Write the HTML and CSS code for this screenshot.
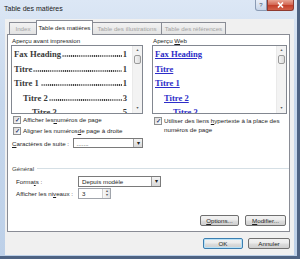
FILE: index.html
```html
<!DOCTYPE html>
<html>
<head>
    <title>Table des matières</title>
    <meta charset="UTF-8">
    <link rel="stylesheet" href="styles.css">
</head>
<body>
    <div class="window">
        <div class="titlebar">
            <span class="title">Table des matières</span>
            <div class="caption-buttons">
                <span class="cap-help">?</span>
                <span class="cap-close">
                    <svg width="7" height="6" viewBox="0 0 7 6"><path d="M1 0.5 L6 5.5 M6 0.5 L1 5.5" stroke="#fff" stroke-width="1.6"/></svg>
                </span>
            </div>
        </div>

        <div class="client">
            <div class="tabs">
                <span class="tab tab-disabled tab-index">Index</span>
                <span class="tab tab-active">Table des matières</span>
                <span class="tab tab-disabled tab-illus">Table des illustrations</span>
                <span class="tab tab-disabled tab-refs">Table des références</span>
            </div>

            <div class="panel">
                <div class="previews">
                    <div class="col">
                        <div class="caption">Aperçu avant impression</div>
                        <div class="preview">
                            <div class="lines print-lines">
                                <div class="line"><span>Fax Heading</span><span class="dots"></span><span>1</span></div>
                                <div class="line"><span>Titre</span><span class="dots"></span><span>1</span></div>
                                <div class="line"><span>Titre 1</span><span class="dots gap"></span><span>1</span></div>
                                <div class="line lvl2"><span>Titre 2</span><span class="dots"></span><span>3</span></div>
                                <div class="line lvl3"><span>Titre 3</span><span class="dots"></span><span>5</span></div>
                            </div>
                            <div class="scrollbar">
                                <span class="sb-arrow">▲</span>
                                <span class="sb-thumb"></span>
                                <span class="sb-fill"></span>
                                <span class="sb-arrow">▼</span>
                            </div>
                        </div>
                        <div class="check"><span class="box">✓</span>Afficher les <u>n</u>uméros de page</div>
                        <div class="check"><span class="box">✓</span>Aligner les numéros <u>d</u>e page à droite</div>
                        <div class="field suite">
                            <span class="field-label"><u>C</u>aractères de suite :</span>
                            <span class="combo combo-suite"><span class="combo-text">.......</span><span class="combo-arrow">▾</span></span>
                        </div>
                    </div>

                    <div class="col">
                        <div class="caption">Aperçu <u>W</u>eb</div>
                        <div class="preview">
                            <div class="lines web-lines">
                                <div class="line"><a>Fax Heading</a></div>
                                <div class="line"><a>Titre</a></div>
                                <div class="line"><a>Titre 1</a></div>
                                <div class="line lvl2"><a>Titre 2</a></div>
                                <div class="line lvl3"><a>Titre 3</a></div>
                            </div>
                            <div class="scrollbar">
                                <span class="sb-arrow">▲</span>
                                <span class="sb-thumb"></span>
                                <span class="sb-fill"></span>
                                <span class="sb-arrow">▼</span>
                            </div>
                        </div>
                        <div class="check check-wrap"><span class="box">✓</span><span>Utiliser des liens <u>h</u>ypertexte à la place des numéros de page</span></div>
                    </div>
                </div>

                <div class="general">
                    <div class="group-title"><span>Général</span><span class="rule"></span></div>
                    <div class="field">
                        <span class="field-label wide">Forma<u>t</u>s :</span>
                        <span class="combo combo-formats"><span class="combo-text">Depuis modèle</span><span class="combo-arrow">▾</span></span>
                    </div>
                    <div class="field">
                        <span class="field-label wide">Afficher les ni<u>v</u>eaux :</span>
                        <span class="spin"><span class="spin-text">3</span><span class="spin-arrows"><span>▴</span><span>▾</span></span></span>
                    </div>
                </div>

                <div class="panel-buttons">
                    <button class="btn btn-options"><u>O</u>ptions...</button>
                    <button class="btn btn-modif"><u>M</u>odifier...</button>
                </div>
            </div>

            <div class="dialog-buttons">
                <button class="btn btn-default">OK</button>
                <button class="btn btn-cancel">Annuler</button>
            </div>
        </div>
    </div>
</body>
</html>
```

FILE: styles.css
```css
body {
    margin: 0;
    background: #4e6383;
    font-family: "Liberation Sans", Arial, sans-serif;
    font-size: 6.2px;
    color: #1e1e1e;
    overflow: hidden;
}
u { text-decoration: underline; }

.window {
    width: 297px;
    height: 256px;
    background: linear-gradient(180deg, #dce7f5 0%, #c6d7ec 40%, #bdd0e8 100%);
    display: flex;
    flex-direction: column;
}
.titlebar {
    height: 19px;
    display: flex;
    align-items: flex-start;
    padding-left: 4px;
}
.title {
    font-size: 7px;
    line-height: 18px;
    color: #1b1b1b;
}
.caption-buttons {
    margin-left: auto;
    margin-right: 3px;
    display: flex;
}
.cap-help {
    width: 12px;
    height: 11px;
    box-sizing: border-box;
    border: 1px solid #8a9bb4;
    border-top: none;
    border-radius: 0 0 0 3px;
    background: linear-gradient(180deg, #e8eef7, #c9d6e8);
    font-size: 6px;
    line-height: 10px;
    text-align: center;
    color: #44536b;
}
.cap-close {
    width: 27px;
    height: 11px;
    box-sizing: border-box;
    border: 1px solid #8e3a30;
    border-top: none;
    border-radius: 0 0 3px 0;
    background: linear-gradient(180deg, #e8a493 0%, #d46a56 45%, #c3402b 55%, #d2624a 100%);
    display: flex;
    align-items: center;
    justify-content: center;
}

.client {
    flex: 1;
    margin: 0 3px 1px 5px;
    background: #f0f0f0;
    padding: 1px 4px 0 2px;
    display: flex;
    flex-direction: column;
}

.tabs {
    display: flex;
    height: 14px;
    align-items: flex-end;
    padding-left: 2px;
    position: relative;
    z-index: 1;
}
.tab {
    height: 12px;
    box-sizing: border-box;
    border: 1px solid #898c95;
    border-bottom: none;
    line-height: 11px;
    text-align: center;
    background: linear-gradient(180deg, #f2f2f2, #e3e3e3);
    margin-right: -1px;
}
.tab-disabled { color: #a3a3a3; }
.tab-index { width: 28px; }
.tab-illus { width: 70px; }
.tab-refs { width: 65px; }
.tab-active {
    width: 57px;
    height: 15px;
    margin: 0 -1px 0 0;
    background: #fff;
    line-height: 13px;
    position: relative;
    top: 1px;
    padding-bottom: 1px;
}

.panel {
    height: 198px;
    box-sizing: border-box;
    background: #fff;
    border: 1px solid #898c95;
    display: flex;
    flex-direction: column;
}

.previews {
    display: grid;
    grid-template-columns: 132px 135px;
    column-gap: 9px;
    padding-left: 3px;
}
.caption {
    line-height: 8px;
    padding: 2px 0 0 1px;
    height: 8px;
}
.preview {
    height: 69px;
    box-sizing: border-box;
    border: 1px solid #828790;
    display: flex;
    overflow: hidden;
}
.lines {
    flex: 1;
    padding: 1px 5px 0 2px;
    font-family: "Liberation Serif", "Times New Roman", serif;
    font-weight: bold;
    font-size: 8.6px;
    line-height: 14.5px;
    overflow: hidden;
}
.line {
    display: flex;
    white-space: nowrap;
}
.lvl2 { padding-left: 9px; }
.lvl3 { padding-left: 18px; }
.print-lines { color: #3a3a3a; }
.dots {
    flex: 1;
    height: 10px;
    margin: 0 1px 0 1px;
    background-image: radial-gradient(circle, #3a3a3a 0.7px, transparent 0.9px);
    background-size: 2.1px 2px;
    background-repeat: repeat-x;
    background-position: 0 bottom;
}
.dots.gap { margin-left: 2px; }
.web-lines a {
    color: #2d2dc8;
    text-decoration: underline;
}

.scrollbar {
    width: 9px;
    display: flex;
    flex-direction: column;
    background: #f3f3f3;
    border-left: 1px solid #eaeaea;
}
.sb-arrow {
    height: 9px;
    font-size: 3.5px;
    line-height: 9px;
    text-align: center;
    color: #5a5a5a;
}
.sb-thumb {
    height: 9px;
    margin: 0 1px;
    box-sizing: border-box;
    border: 1px solid #9a9a9a;
    border-radius: 2px;
    background: linear-gradient(90deg, #f4f4f4, #dcdcdc);
}
.sb-fill { flex: 1; }

.check {
    display: flex;
    align-items: center;
    height: 11px;
    padding-left: 2px;
    white-space: nowrap;
}
.box {
    width: 6px;
    height: 6px;
    border: 1px solid #8e8f8f;
    background: linear-gradient(135deg, #dcdcdc, #fafafa);
    margin-right: 2px;
    font-size: 6px;
    line-height: 6px;
    text-align: center;
    color: #2c3f75;
    font-weight: bold;
}
.check-wrap {
    align-items: flex-start;
    height: auto;
    padding-top: 2px;
    white-space: normal;
    line-height: 9px;
}
.check-wrap .box { margin-top: 1px; flex: none; }

.field {
    display: flex;
    align-items: center;
}
.suite { margin-top: 2px; padding-left: 1px; }
.field-label { width: 61px; }
.field-label.wide { width: 62px; }

.combo {
    display: flex;
    height: 11px;
    box-sizing: border-box;
    border: 1px solid #7a7a7a;
    background: #fff;
}
.combo-suite { width: 71px; height: 10px; }
.combo-formats { width: 83px; }
.combo-text {
    flex: 1;
    padding-left: 3px;
    line-height: 9px;
}
.combo-arrow {
    width: 8px;
    border-left: 1px solid #a0a0a0;
    background: linear-gradient(180deg, #f4f4f4, #d8d8d8);
    font-size: 6px;
    line-height: 8px;
    text-align: center;
    color: #222;
}

.general {
    padding: 16px 0 0 4px;
}
.group-title {
    display: flex;
    align-items: center;
    height: 8px;
    color: #3a3a3a;
    margin-bottom: 3px;
}
.rule {
    flex: 1;
    margin-left: 3px;
    border-top: 1px solid #d5dfe5;
}
.general .field {
    padding-left: 4px;
    height: 12px;
}
.spin {
    display: flex;
    width: 33px;
    height: 11px;
    box-sizing: border-box;
    border: 1px solid #a0a4ab;
    background: #fff;
}
.spin-text {
    flex: 1;
    padding-left: 3px;
    line-height: 9px;
}
.spin-arrows {
    width: 7px;
    display: flex;
    flex-direction: column;
    font-size: 4px;
    line-height: 4.5px;
    text-align: center;
    color: #555;
    background: linear-gradient(90deg, #f7f7f7, #e4e4e4);
    border-left: 1px solid #d0d0d0;
}

.btn {
    font-family: "Liberation Sans", Arial, sans-serif;
    font-size: 6.2px;
    height: 11px;
    padding: 0;
    box-sizing: border-box;
    border: 1px solid #707070;
    border-radius: 2px;
    background: linear-gradient(180deg, #f2f2f2 0%, #ebebeb 48%, #dddddd 52%, #cfcfcf 100%);
    color: #1e1e1e;
    line-height: 9px;
}
.panel-buttons {
    margin-top: auto;
    display: flex;
    justify-content: flex-end;
    gap: 6px;
    padding: 0 3px 5px 0;
}
.btn-options { width: 39px; }
.btn-modif { width: 41px; }

.dialog-buttons {
    display: flex;
    justify-content: flex-end;
    gap: 5px;
    padding-top: 6px;
}
.btn-default {
    width: 40px;
    border-color: #3c7fb1;
    box-shadow: inset 0 0 0 1px #b9e1f6;
}
.btn-cancel { width: 42px; }
```
